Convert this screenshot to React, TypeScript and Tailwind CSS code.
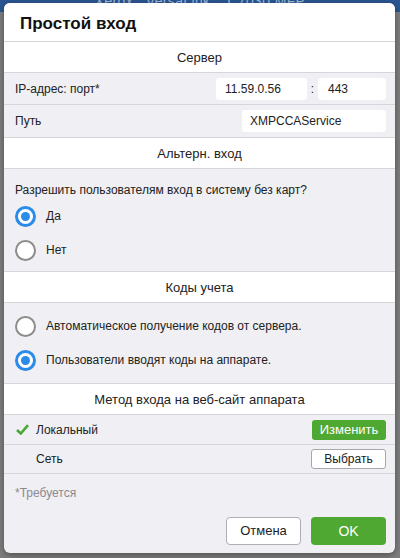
import React from "react";

const GREEN = "bg-[#4fa832]";

function SectionHeader({ title }: { title: string }) {
  return (
    <div className="flex h-[31px] shrink-0 items-center justify-center border-b border-[#d6d6da] bg-white pt-[2px] text-[13px] text-[#222]">
      {title}
    </div>
  );
}

function Radio({ checked, label }: { checked: boolean; label: string }) {
  return (
    <div className="flex h-[34px] items-center gap-[10px]">
      {checked ? (
        <span className="flex h-[21px] w-[21px] items-center justify-center rounded-full border-[3px] border-[#2b8be8] bg-white">
          <span className="h-[9px] w-[9px] rounded-full bg-[#2b8be8]" />
        </span>
      ) : (
        <span className="h-[21px] w-[21px] rounded-full border-[2.5px] border-[#8c8c8c] bg-white" />
      )}
      <span className="text-[12px] text-[#222]">{label}</span>
    </div>
  );
}

function TextBox({ value, className }: { value: string; className: string }) {
  return (
    <div className={`flex h-[22px] items-center rounded-[3px] bg-white text-[12px] text-[#222] ${className}`}>
      {value}
    </div>
  );
}

export default function App() {
  return (
    <div className="relative h-[558px] w-[400px] overflow-hidden bg-[#7d7d7d] font-['Liberation_Sans',Arial,sans-serif]">
      {/* page behind the dialog */}
      <div className="absolute left-0 top-0 flex h-[12px] w-full justify-center bg-[#2a5590]">
        <span className="-mt-[9px] text-[14px] tracking-wide text-[#9fb6d6]">
          Xerox&nbsp;&nbsp;&nbsp;VersaLink&nbsp;&nbsp;&nbsp;&nbsp;C7030 MFP
        </span>
      </div>

      <div className="absolute left-[4px] top-[3px] flex h-[550px] w-[391px] flex-col overflow-hidden rounded-[6px] bg-[#efeff4] shadow-[0_2px_6px_rgba(0,0,0,0.35)]">
        <div className="flex h-[39px] shrink-0 items-center border-b border-[#d6d6da] bg-white px-[16px] pt-[4px] text-[17px] font-bold text-[#111]">
          Простой вход
        </div>

        <SectionHeader title="Сервер" />
        <div className="flex h-[32px] shrink-0 items-center border-b border-[#d6d6da] pl-[11px] pr-[9px] text-[12px] text-[#222]">
          <span className="flex-1">IP-адрес: порт*</span>
          <TextBox value="11.59.0.56" className="w-[91px] pl-[9px]" />
          <span className="w-[11px] text-center">:</span>
          <TextBox value="443" className="w-[68px] pl-[10px]" />
        </div>
        <div className="flex h-[33px] shrink-0 items-center border-b border-[#d6d6da] pl-[11px] pr-[9px] text-[12px] text-[#222]">
          <span className="flex-1">Путь</span>
          <TextBox value="XMPCCAService" className="w-[144px] pl-[8px]" />
        </div>

        <SectionHeader title="Альтерн. вход" />
        <div className="shrink-0 border-b border-[#d6d6da] px-[11px] pb-[4px] pt-[13px]">
          <div className="mb-[1px] text-[12px] leading-[16px] text-[#222]">
            Разрешить пользователям вход в систему без карт?
          </div>
          <Radio checked label="Да" />
          <Radio checked={false} label="Нет" />
        </div>

        <SectionHeader title="Коды учета" />
        <div className="shrink-0 border-b border-[#d6d6da] px-[11px] pb-[6px] pt-[6px]">
          <Radio checked={false} label="Автоматическое получение кодов от сервера." />
          <Radio checked label="Пользователи вводят коды на аппарате." />
        </div>

        <SectionHeader title="Метод входа на веб-сайт аппарата" />
        <div className="flex h-[30px] shrink-0 items-center border-b border-[#d6d6da] pl-[12px] pr-[9px] text-[12px] text-[#222]">
          <svg width="13" height="11" viewBox="0 0 13 11" className="mr-[7px]">
            <path d="M1 6 L4.8 9.5 L12 1.2" fill="none" stroke="#4aa836" strokeWidth="2.6" />
          </svg>
          <span className="flex-1">Локальный</span>
          <button className={`h-[20px] w-[74px] rounded-[3px] ${GREEN} text-[13px] text-white`}>
            Изменить
          </button>
        </div>
        <div className="flex h-[29px] shrink-0 items-center border-b border-[#d6d6da] pl-[32px] pr-[9px] text-[12px] text-[#222]">
          <span className="flex-1">Сеть</span>
          <button className="h-[20px] w-[75px] rounded-[3px] border border-[#a8a8ac] bg-white text-[12px] text-[#222]">
            Выбрать
          </button>
        </div>

        <div className="flex flex-1 flex-col px-[11px] pr-[9px]">
          <div className="pt-[12px] text-[12px] leading-[14px] text-[#8a8a8e]">*Требуется</div>
          <div className="mt-[17px] flex justify-end gap-[10px]">
            <button className="h-[28px] w-[75px] rounded-[4px] border border-[#adadb2] bg-white text-[13px] text-[#222]">
              Отмена
            </button>
            <button className={`h-[28px] w-[75px] rounded-[4px] ${GREEN} text-[14px] text-white`}>
              OK
            </button>
          </div>
        </div>
      </div>
    </div>
  );
}
